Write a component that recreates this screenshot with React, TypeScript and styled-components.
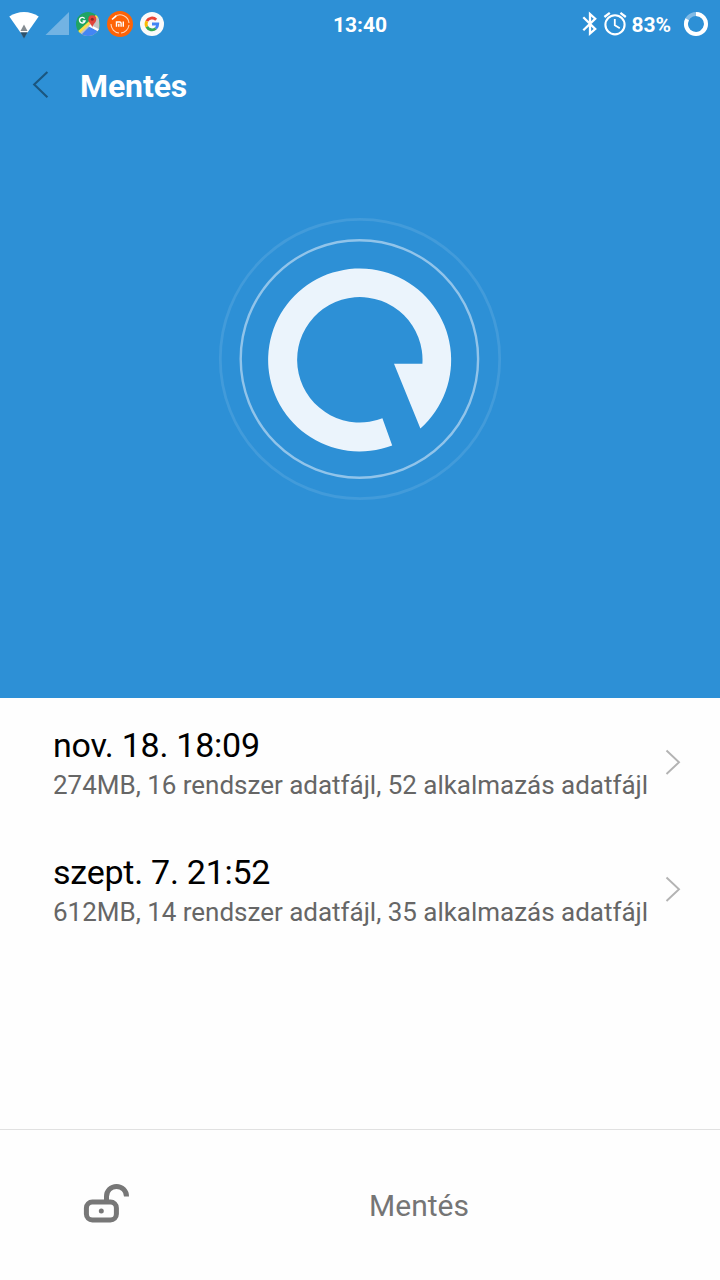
import React from 'react';
import styled, { createGlobalStyle } from 'styled-components';

const Global = createGlobalStyle`
  * { box-sizing: border-box; }
  body { margin: 0; background: #fefefe; font-family: Roboto, "Liberation Sans", sans-serif; }
  svg { display: block; flex: none; }
`;

const Screen = styled.div`
  width: 720px;
  height: 1280px;
  display: flex;
  flex-direction: column;
  background: #fefefe;
  overflow: hidden;
`;

const Hero = styled.section`
  height: 698px;
  flex: none;
  display: flex;
  flex-direction: column;
  background: #2d90d6;
`;

const StatusBar = styled.div`
  height: 50px;
  display: grid;
  grid-template-columns: 1fr auto 1fr;
  color: #fff;
`;

const Clock = styled.span`
  font-size: 21px;
  font-weight: 700;
  line-height: 50px;
`;

const Battery = styled(Clock)`
  margin: 0 11px 0 4px;
`;

const StatusRight = styled.div`
  display: flex;
  justify-content: flex-end;
  padding-right: 12px;
`;

const Header = styled.header`
  height: 70px;
  display: flex;
  align-items: center;
  padding-left: 28px;
  gap: 26px;
`;

const Title = styled.h1`
  margin: 0;
  font-size: 32px;
  font-weight: 700;
  line-height: 40px;
  letter-spacing: -0.1px;
  padding-top: 2px;
  color: #fff;
`;

const Emblem = styled.div`
  display: flex;
  justify-content: center;
  padding-top: 90px;
`;

const List = styled.main`
  flex: 1;
`;

const Row = styled.article`
  height: 127px;
  display: flex;
  align-items: center;
  justify-content: space-between;
  padding: 1px 36px 0 53px;
`;

const RowText = styled.div`
  display: flex;
  flex-direction: column;
  gap: 5px;
  white-space: nowrap;
`;

const RowTitle = styled.div`
  font-size: 34px;
  line-height: 40px;
  letter-spacing: -0.25px;
  color: #000;
`;

const RowDetail = styled.div`
  font-size: 26px;
  line-height: 30px;
  letter-spacing: -0.02px;
  color: #666;
`;

const Footer = styled.footer`
  height: 151px;
  flex: none;
  display: grid;
  grid-template-columns: 118px 1fr;
  align-items: center;
  border-top: 1px solid #e1e1e1;
  padding: 0 0 0 80px;
`;

const SaveButton = styled.button`
  border: 0;
  padding: 2px 0 0;
  background: none;
  font: 400 30px/40px Roboto, sans-serif;
  color: #757575;
  width: 442px;
`;

const Notifications = () => (
  <svg width="180" height="50" viewBox="0 0 180 50">
    <path d="M9.3 16.5Q16 12 24 12T38.7 16.5L24 37.5Z" fill="#fff" />
    <path d="M24 24.5L27.5 31H20.5Z" fill="#858c91" />
    <path d="M20.3 32.3H27.7L24 38.5Z" fill="#2b516d" />
    <path d="M69 12V35H45.5Z" fill="#72b3e3" />
    <g>
      <clipPath id="map"><circle cx="88" cy="24" r="12" /></clipPath>
      <g clipPath="url(#map)">
        <rect x="76" y="12" width="24" height="24" fill="#1fa463" />
        <path d="M99 15L76 36H100Z" fill="#c4c4c4" />
        <path d="M89.5 26.5L80 36H99V32Z" fill="#4486f4" />
        <path d="M78 33L98 15" stroke="#fcdc4b" strokeWidth="3" />
        <path d="M89.5 25.5L100 31" stroke="#fff" strokeWidth="2.4" />
      </g>
      <path d="M84.6 18.6A2.8 2.8 0 1 0 85 21H82.6" fill="none" stroke="#fff" strokeWidth="1.4" />
      <path d="M92.3 27.5C91.7 24 88.3 22.5 88.3 19.2A4 4 0 0 1 96.3 19.2C96.3 22.5 92.9 24 92.3 27.5Z" fill="#e0443a" />
      <circle cx="92.3" cy="19.2" r="1.5" fill="#8c2b22" />
    </g>
    <circle cx="120" cy="24" r="13" fill="#fe6306" />
    <path d="M115 16.4A9 9 0 0 1 129 23M111 24A9 9 0 0 0 119 33M121 33A9 9 0 0 0 129 25" fill="none" stroke="#ffd4b8" strokeWidth="1.1" />
    <path d="M112 19.5L116.2 15.8" stroke="#fff" strokeWidth="1.6" />
    <path d="M116.5 26.8V22H119.8Q121.1 22 121.1 23.3V26.8M118.8 23.8V26.8M123.3 21.6V26.8" fill="none" stroke="#fff" strokeWidth="1.4" />
    <circle cx="152" cy="24" r="12" fill="#fafafa" />
    <g fill="none" strokeWidth="2.9">
      <path d="M156.2 19.7A5.9 5.9 0 0 0 146.8 21.2" stroke="#ea4335" />
      <path d="M146.8 21.2A5.9 5.9 0 0 0 146.8 26.8" stroke="#fbbc05" />
      <path d="M146.8 26.8A5.9 5.9 0 0 0 155.8 28.5" stroke="#34a853" />
      <path d="M155.8 28.5Q157.7 26.8 157.7 24H152" stroke="#4285f4" />
    </g>
  </svg>
);

const Connectivity = () => (
  <svg width="47" height="50" viewBox="0 0 47 50" fill="none" stroke="#fff">
    <path d="M3.3 17.3L15.2 29L10 33.5V14L15.2 18.7L3.3 30.3" strokeWidth="2.3" />
    <circle cx="35" cy="24.8" r="9.6" strokeWidth="2.1" />
    <path d="M34.8 19V25.2L39.8 28.2" strokeWidth="1.8" />
    <path d="M24.4 17L29.8 12.8M45.8 17L40.4 12.8" strokeWidth="2.3" />
  </svg>
);

const BatteryRing = () => (
  <svg width="26" height="50" viewBox="0 0 26 50" fill="none" strokeWidth="4">
    <circle cx="14" cy="24" r="10" stroke="#81bbe6" />
    <path d="M14 14A10 10 0 1 1 5.2 19.2" stroke="#fff" />
  </svg>
);

const BackArrow = () => (
  <svg width="26" height="50" viewBox="0 0 26 50">
    <path d="M19.4 12L6.2 24.5L19.4 37.3" fill="none" stroke="#1b567f" strokeWidth="2.1" />
  </svg>
);

const BackupEmblem = () => (
  <svg width="300" height="300" viewBox="210 210 300 300">
    <circle cx="360" cy="359" r="139.7" fill="none" stroke="#429bda" strokeWidth="2.8" />
    <circle cx="359.4" cy="359" r="118.7" fill="none" stroke="#91c4ea" strokeWidth="2.4" />
    <path
      d="M392.2 445.5A91.5 91.5 0 1 1 420.4 428.4L394 363.8H422.4A62.7 62.7 0 1 0 382.4 418.3Z"
      fill="#ebf4fc"
    />
  </svg>
);

const Chevron = () => (
  <svg width="20" height="30" viewBox="0 0 20 30">
    <path d="M2.5 3.5L15 15.2L2.5 27" fill="none" stroke="#b3b3b3" strokeWidth="1.9" />
  </svg>
);

const OpenLock = () => (
  <svg width="52" height="50" viewBox="0 0 52 50" fill="none" stroke="#777" strokeWidth="5">
    <rect x="6.4" y="21.9" width="30" height="18" rx="6" />
    <path d="M26.5 21V16.4A10 10 0 0 1 46.5 16.4" />
    <circle cx="21.3" cy="30.9" r="2.5" fill="#777" stroke="none" />
  </svg>
);

const backups = [
  { date: 'nov. 18. 18:09', detail: '274MB, 16 rendszer adatfájl, 52 alkalmazás adatfájl' },
  { date: 'szept. 7. 21:52', detail: '612MB, 14 rendszer adatfájl, 35 alkalmazás adatfájl' },
];

export default function App() {
  return (
    <Screen>
      <Global />
      <Hero>
        <StatusBar>
          <Notifications />
          <Clock>13:40</Clock>
          <StatusRight>
            <Connectivity />
            <Battery>83%</Battery>
            <BatteryRing />
          </StatusRight>
        </StatusBar>
        <Header>
          <BackArrow />
          <Title>Mentés</Title>
        </Header>
        <Emblem><BackupEmblem /></Emblem>
      </Hero>
      <List>
        {backups.map((b) => (
          <Row key={b.date}>
            <RowText>
              <RowTitle>{b.date}</RowTitle>
              <RowDetail>{b.detail}</RowDetail>
            </RowText>
            <Chevron />
          </Row>
        ))}
      </List>
      <Footer>
        <OpenLock />
        <SaveButton>Mentés</SaveButton>
      </Footer>
    </Screen>
  );
}
